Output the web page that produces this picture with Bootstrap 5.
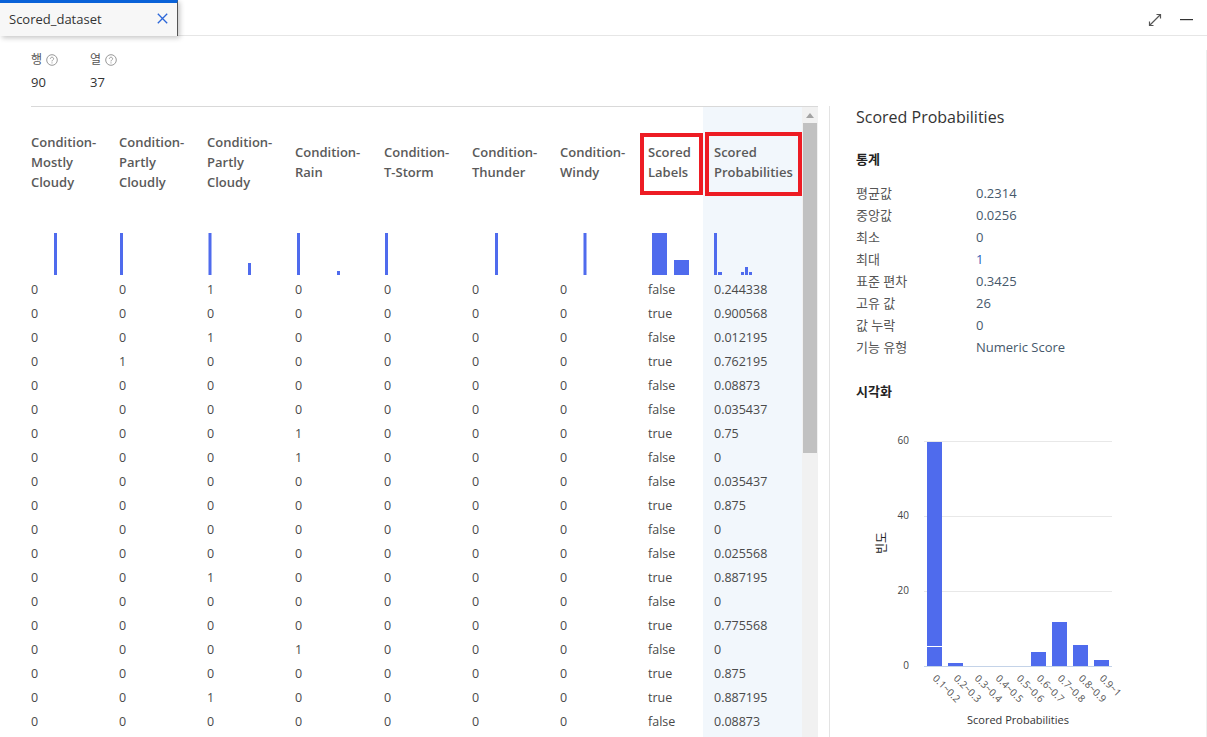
<!DOCTYPE html>
<html lang="ko">
<head>
<meta charset="utf-8">
<title>Scored_dataset</title>
<link rel="stylesheet" href="https://cdn.jsdelivr.net/npm/bootstrap@5.3.0/dist/css/bootstrap.min.css">
<style>
html,body{height:737px;overflow:hidden;background:#fff}
body{font-family:"Open Sans","Noto Sans CJK KR",sans-serif;font-size:12.5px;color:#444;line-height:20px}
.topbar{height:36px;border-bottom:1px solid #e6e6e6}
.doc-tab{width:178px;height:36px;background:#f7f7f7;border-top:3px solid #0a62d8;border-right:1px solid #555;box-shadow:2px 2px 5px rgba(0,0,0,.22);padding:0 9px 2px;font-size:13px;color:#333}
.win-tools{padding-right:14px;gap:18px;padding-top:5px}
.sum-block{padding:14px 0 0 31px;gap:32px;height:70px;color:#333}
.sum-label{font-size:12px;color:#555;line-height:20px}
.sum-num{font-size:13px;line-height:22px;color:#333;padding-top:1px}
.grid-pane{width:787px;margin-left:31px;border-top:1px solid #d9d9d9;height:631px;overflow:hidden}
.data-table{table-layout:fixed;width:771px;border-collapse:collapse;align-self:flex-start}
.data-table td,.data-table th{padding:0;white-space:nowrap;vertical-align:middle}
.data-table th{height:110px;font-weight:600;white-space:normal;line-height:20px;font-size:13px;color:#5a5a5a;position:relative}
.data-table td{height:24px;color:#4a4a4a;font-size:12.5px;padding-top:2px}
.data-table td.hist-cell{height:60px;vertical-align:bottom;padding-top:0;padding-bottom:2px}
.data-table svg{display:block}
.data-table .prob-col{background:#f2f7fc;padding-left:11px}
.red-box{position:absolute;border:4px solid #ed1c24;pointer-events:none}
.red-one{left:-8px;top:26px;width:63px;height:62px}
.red-two{left:2px;top:25px;width:97px;height:64px}
.fake-scroll{width:16px;background:#f1f1f1;flex:none}
.scroll-arrow{height:16px}
.scroll-thumb{height:330px;background:#c1c1c1;margin:0 1px 0 1px}
.detail-pane{margin-left:11px;border-left:1px solid #e3e3e3;height:631px;padding:0 0 0 26px;width:376px;overflow:hidden}
.detail-title{font-size:16px;line-height:22px;color:#333;margin:0}
.detail-head{font-size:13px;font-weight:700;color:#222;line-height:20px;margin:0}
.head-stats{margin-top:21px;margin-bottom:13px}
.head-viz{margin-top:23px}
.chart-svg{display:block;margin-top:29px}
.stat-row{height:22px;line-height:22px;font-size:13px;color:#555}
.stat-name{width:120px;flex:none}
.stat-val{color:#46586b}
.stat-blue{color:#2f5fb8}
.edge-line{position:absolute;left:1206px;top:50px;bottom:0;width:1px;background:#eee}
</style>
</head>
<body>
<div class="topbar d-flex justify-content-between">
  <div class="doc-tab d-flex align-items-center justify-content-between">
    <span>Scored_dataset</span>
    <svg width="11" height="11" viewBox="0 0 11 11" fill="none" stroke="#2b66d9" stroke-width="1.3"><path d="M.8.8l9.400 9.400M10.200.8L.8 10.200"/></svg>
  </div>
  <div class="win-tools d-flex align-items-center">
    <svg width="14" height="14" viewBox="0 0 14 14" fill="none" stroke="#555" stroke-width="1.2"><path d="M1.500 12.500l11-11M8.500 1.500h4v4M1.500 8.500v4h4"/></svg>
    <svg width="13" height="2" viewBox="0 0 13 2"><rect width="13" height="1.200" fill="#333"/></svg>
  </div>
</div>
<div class="edge-line"></div>
<div class="sum-block d-flex">
  <div>
    <div class="sum-label d-flex align-items-center gap-1">행 <svg width="12" height="12" viewBox="0 0 12 12" fill="none" stroke="#999"><circle cx="6" cy="6" r="5.300"/><path d="M4.400 4.800c0-2.100 3.200-2.100 3.200 0 0 1.200-1.600 1.200-1.600 2.600M6 8.400v1"/></svg></div>
    <div class="sum-num">90</div>
  </div>
  <div>
    <div class="sum-label d-flex align-items-center gap-1">열 <svg width="12" height="12" viewBox="0 0 12 12" fill="none" stroke="#999"><circle cx="6" cy="6" r="5.300"/><path d="M4.400 4.800c0-2.100 3.200-2.100 3.200 0 0 1.200-1.600 1.200-1.600 2.600M6 8.400v1"/></svg></div>
    <div class="sum-num">37</div>
  </div>
</div>
<div class="d-flex">
  <div class="grid-pane d-flex">
    <table class="data-table">
      <colgroup><col style="width:88px"><col style="width:88px"><col style="width:88px"><col style="width:89px"><col style="width:88px"><col style="width:88px"><col style="width:88px"><col style="width:55px"><col style="width:99px"></colgroup>
      <thead><tr>
        <th>Condition-<br>Mostly<br>Cloudy</th>
        <th>Condition-<br>Partly<br>Cloudly</th>
        <th>Condition-<br>Partly<br>Cloudy</th>
        <th>Condition-<br>Rain</th>
        <th>Condition-<br>T-Storm</th>
        <th>Condition-<br>Thunder</th>
        <th>Condition-<br>Windy</th>
        <th>Scored<br>Labels<span class="red-box red-one"></span></th>
        <th class="prob-col">Scored<br>Probabilities<span class="red-box red-two"></span></th>
      </tr></thead>
      <tbody>
        <tr>
          <td class="hist-cell"><svg width="88" height="42"><rect x="23" width="3" height="42" fill="#4f6bed"/></svg></td>
          <td class="hist-cell"><svg width="88" height="42"><rect x="1" width="3" height="42" fill="#4f6bed"/></svg></td>
          <td class="hist-cell"><svg width="88" height="42"><rect x="1.500" width="3" height="42" fill="#4f6bed"/><rect x="41" y="30" width="3" height="12" fill="#4f6bed"/></svg></td>
          <td class="hist-cell"><svg width="88" height="42"><rect x="2" width="3" height="42" fill="#4f6bed"/><rect x="42" y="38" width="3" height="4" fill="#4f6bed"/></svg></td>
          <td class="hist-cell"><svg width="88" height="42"><rect x="1" width="3" height="42" fill="#4f6bed"/></svg></td>
          <td class="hist-cell"><svg width="88" height="42"><rect x="23" width="3" height="42" fill="#4f6bed"/></svg></td>
          <td class="hist-cell"><svg width="88" height="42"><rect x="23.500" width="3" height="42" fill="#4f6bed"/></svg></td>
          <td class="hist-cell"><svg width="55" height="42"><rect x="4" width="15" height="42" fill="#4f6bed"/><rect x="26" y="27" width="15" height="15" fill="#4f6bed"/></svg></td>
          <td class="hist-cell prob-col"><svg width="60" height="42"><rect width="3" height="42" fill="#4f6bed"/><rect x="4" y="39" width="4" height="3" fill="#4f6bed"/><rect x="27" y="39" width="3" height="3" fill="#4f6bed"/><rect x="31" y="34" width="3" height="8" fill="#4f6bed"/><rect x="35" y="39" width="3" height="3" fill="#4f6bed"/></svg></td>
        </tr>
        <tr><td>0</td><td>0</td><td>1</td><td>0</td><td>0</td><td>0</td><td>0</td><td>false</td><td class="prob-col">0.244338</td></tr>
        <tr><td>0</td><td>0</td><td>0</td><td>0</td><td>0</td><td>0</td><td>0</td><td>true</td><td class="prob-col">0.900568</td></tr>
        <tr><td>0</td><td>0</td><td>1</td><td>0</td><td>0</td><td>0</td><td>0</td><td>false</td><td class="prob-col">0.012195</td></tr>
        <tr><td>0</td><td>1</td><td>0</td><td>0</td><td>0</td><td>0</td><td>0</td><td>true</td><td class="prob-col">0.762195</td></tr>
        <tr><td>0</td><td>0</td><td>0</td><td>0</td><td>0</td><td>0</td><td>0</td><td>false</td><td class="prob-col">0.08873</td></tr>
        <tr><td>0</td><td>0</td><td>0</td><td>0</td><td>0</td><td>0</td><td>0</td><td>false</td><td class="prob-col">0.035437</td></tr>
        <tr><td>0</td><td>0</td><td>0</td><td>1</td><td>0</td><td>0</td><td>0</td><td>true</td><td class="prob-col">0.75</td></tr>
        <tr><td>0</td><td>0</td><td>0</td><td>1</td><td>0</td><td>0</td><td>0</td><td>false</td><td class="prob-col">0</td></tr>
        <tr><td>0</td><td>0</td><td>0</td><td>0</td><td>0</td><td>0</td><td>0</td><td>false</td><td class="prob-col">0.035437</td></tr>
        <tr><td>0</td><td>0</td><td>0</td><td>0</td><td>0</td><td>0</td><td>0</td><td>true</td><td class="prob-col">0.875</td></tr>
        <tr><td>0</td><td>0</td><td>0</td><td>0</td><td>0</td><td>0</td><td>0</td><td>false</td><td class="prob-col">0</td></tr>
        <tr><td>0</td><td>0</td><td>0</td><td>0</td><td>0</td><td>0</td><td>0</td><td>false</td><td class="prob-col">0.025568</td></tr>
        <tr><td>0</td><td>0</td><td>1</td><td>0</td><td>0</td><td>0</td><td>0</td><td>true</td><td class="prob-col">0.887195</td></tr>
        <tr><td>0</td><td>0</td><td>0</td><td>0</td><td>0</td><td>0</td><td>0</td><td>false</td><td class="prob-col">0</td></tr>
        <tr><td>0</td><td>0</td><td>0</td><td>0</td><td>0</td><td>0</td><td>0</td><td>true</td><td class="prob-col">0.775568</td></tr>
        <tr><td>0</td><td>0</td><td>0</td><td>1</td><td>0</td><td>0</td><td>0</td><td>false</td><td class="prob-col">0</td></tr>
        <tr><td>0</td><td>0</td><td>0</td><td>0</td><td>0</td><td>0</td><td>0</td><td>true</td><td class="prob-col">0.875</td></tr>
        <tr><td>0</td><td>0</td><td>1</td><td>0</td><td>0</td><td>0</td><td>0</td><td>true</td><td class="prob-col">0.887195</td></tr>
        <tr><td>0</td><td>0</td><td>0</td><td>0</td><td>0</td><td>0</td><td>0</td><td>false</td><td class="prob-col">0.08873</td></tr>
        <tr><td colspan="8"></td><td class="prob-col"></td></tr>
      </tbody>
    </table>
    <div class="fake-scroll">
      <div class="scroll-arrow d-flex justify-content-center align-items-center"><svg width="8" height="5" viewBox="0 0 8 5"><path d="M4 0l4 5H0z" fill="#a3a3a3"/></svg></div>
      <div class="scroll-thumb"></div>
    </div>
  </div>
  <div class="detail-pane">
    <h2 class="detail-title">Scored Probabilities</h2>
    <h3 class="detail-head head-stats">통계</h3>
    <div class="stat-row d-flex"><span class="stat-name">평균값</span><span class="stat-val">0.2314</span></div>
    <div class="stat-row d-flex"><span class="stat-name">중앙값</span><span class="stat-val">0.0256</span></div>
    <div class="stat-row d-flex"><span class="stat-name">최소</span><span class="stat-val">0</span></div>
    <div class="stat-row d-flex"><span class="stat-name">최대</span><span class="stat-val stat-blue">1</span></div>
    <div class="stat-row d-flex"><span class="stat-name">표준 편차</span><span class="stat-val">0.3425</span></div>
    <div class="stat-row d-flex"><span class="stat-name">고유 값</span><span class="stat-val">26</span></div>
    <div class="stat-row d-flex"><span class="stat-name">값 누락</span><span class="stat-val">0</span></div>
    <div class="stat-row d-flex"><span class="stat-name">기능 유형</span><span class="stat-val">Numeric Score</span></div>
    <h3 class="detail-head head-viz">시각화</h3>
    <svg class="chart-svg" width="300" height="310" viewBox="856 430 300 310" font-family="'Open Sans','Noto Sans CJK KR',sans-serif">
      <g stroke="#e8e8e8"><path d="M924 441.500h188M924 516.500h188M924 591.500h188"/></g>
      <path d="M924 666.500h188" stroke="#c4d3e8"/>
      <g fill="#4f6bed">
        <rect x="927" y="442" width="15" height="204"/><rect x="927" y="647" width="15" height="19"/>
        <rect x="948" y="663" width="15" height="3"/><rect x="1031" y="652" width="15" height="14"/>
        <rect x="1052" y="622" width="15" height="44"/><rect x="1073" y="645" width="15" height="21"/>
        <rect x="1094" y="660" width="15" height="6"/>
      </g>
      <g font-size="10" fill="#444" text-anchor="end"><text x="909" y="444">60</text><text x="909" y="519">40</text><text x="909" y="594">20</text><text x="909" y="669">0</text></g>
      <text transform="translate(886 543) rotate(-90)" font-size="12" fill="#222" text-anchor="middle">빈도</text>
      <g font-size="10" fill="#555">
        <text transform="translate(932 679) rotate(45)">0.1~0.2</text>
        <text transform="translate(953 679) rotate(45)">0.2~0.3</text>
        <text transform="translate(974 679) rotate(45)">0.3~0.4</text>
        <text transform="translate(995 679) rotate(45)">0.4~0.5</text>
        <text transform="translate(1016 679) rotate(45)">0.5~0.6</text>
        <text transform="translate(1036 679) rotate(45)">0.6~0.7</text>
        <text transform="translate(1057 679) rotate(45)">0.7~0.8</text>
        <text transform="translate(1078 679) rotate(45)">0.8~0.9</text>
        <text transform="translate(1099 679) rotate(45)">0.9~1</text>
      </g>
      <text x="1018" y="724" font-size="11" fill="#333" text-anchor="middle">Scored Probabilities</text>
    </svg>
  </div>
</div>
</body>
</html>
